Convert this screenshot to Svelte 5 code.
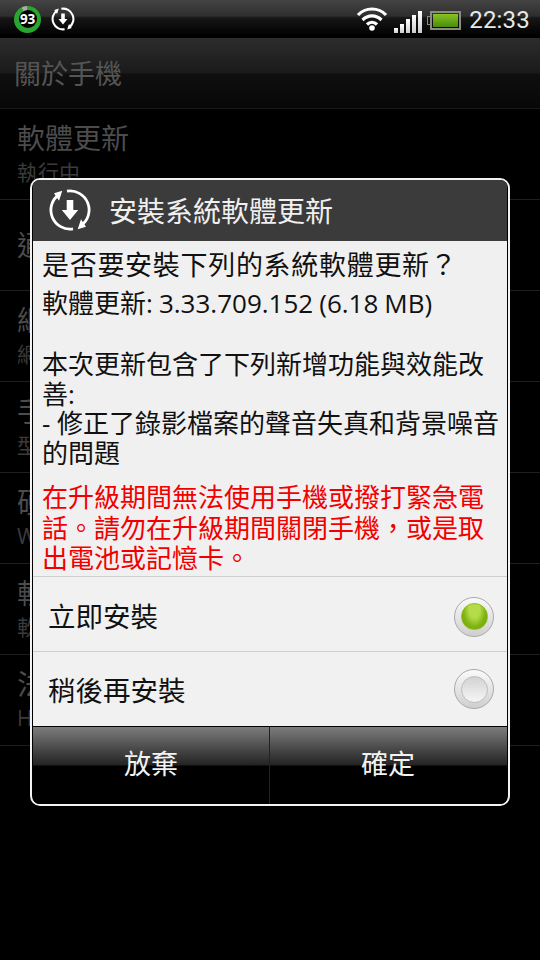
<script lang="ts">
  const rows = [
    { title: "軟體更新", sub: "執行中" },
    { title: "通知", sub: "" },
    { title: "網路", sub: "網路狀態" },
    { title: "手機身分", sub: "型號、電話號碼" },
    { title: "硬體資訊", sub: "Wi-Fi MAC" },
    { title: "軟體資訊", sub: "軟體版本" },
    { title: "法律資訊", sub: "HTC 法律資訊" },
  ];
  let choice = $state("now");
</script>

{#snippet updateIcon(size: number, stroke: number)}
  <svg viewBox="0 0 44 44" width={size} height={size} fill="none">
    <path d="M11 6.500A19 19 0 0 0 25 40.800" stroke="#fff" stroke-width={stroke} />
    <path d="M19 3.200A19 19 0 0 1 33 37.500" stroke="#fff" stroke-width={stroke} />
    <path d="M14.300 2.700L6 5.300l5 7.400zM29.700 41.300l8.300-2.600-5-7.400z" fill="#fff" />
    <path d="M18.700 12h6.600v10h4.900L22 32 13.800 22h4.900z" fill="#fff" />
  </svg>
{/snippet}

<div class="screen">
  <div class="status">
    <div class="status-left">
      <div class="battery-ring"><span>93</span></div>
      {@render updateIcon(24, 3.8)}
    </div>
    <div class="status-right">
      <svg class="wifi" viewBox="0 0 32 26" width="32" height="26" fill="none" stroke="#fff" stroke-width="3.200">
        <path d="M2 10C9.500 2 22.500 2 30 10" />
        <path d="M6.500 15C12 9.500 20 9.500 25.500 15" />
        <path d="M11 19.500C14 16.500 18 16.500 21 19.500" />
        <circle cx="16" cy="23" r="2.800" fill="#fff" stroke="none" />
      </svg>
      <div class="signal">
        <i style="height: 5px"></i>
        <i style="height: 9px"></i>
        <i style="height: 14px"></i>
        <i style="height: 18px"></i>
        <i style="height: 22px"></i>
      </div>
      <div class="battery"><div class="battery-fill"></div></div>
      <span class="clock">22:33</span>
    </div>
  </div>

  <div class="header">關於手機</div>

  <div class="list">
    {#each rows as row}
      <div class="row" class:single={!row.sub}>
        <div class="row-title">{row.title}</div>
        {#if row.sub}<div class="row-sub">{row.sub}</div>{/if}
      </div>
    {/each}
  </div>

  <div class="dialog">
    <div class="dialog-title">
      {@render updateIcon(44, 2.8)}
      <span>安裝系統軟體更新</span>
    </div>

    <div class="dialog-body">
      <div class="question">是否要安裝下列的系統軟體更新？</div>
      <div class="version">軟體更新: 3.33.709.152 (6.18 MB)</div>
      <div class="notes">本次更新包含了下列新增功能與效能改善:<br />- 修正了錄影檔案的聲音失真和背景噪音的問題</div>
      <div class="warning">在升級期間無法使用手機或撥打緊急電話。請勿在升級期間關閉手機，或是取出電池或記憶卡。</div>
    </div>

    <button class="option first" onclick={() => (choice = "now")}>
      <span>立即安裝</span>
      <span class="radio" class:on={choice === "now"}><i></i></span>
    </button>
    <button class="option" onclick={() => (choice = "later")}>
      <span>稍後再安裝</span>
      <span class="radio" class:on={choice === "later"}><i></i></span>
    </button>

    <div class="actions">
      <button class="action">放棄</button>
      <button class="action">確定</button>
    </div>
  </div>
</div>

<style>
  :global(body) {
    background: #000;
  }

  .screen {
    position: relative;
    width: 540px;
    height: 960px;
    overflow: hidden;
    background: #000;
    font-family: "Open Sans", "Noto Sans CJK TC", sans-serif;
  }

  .status {
    height: 38px;
    display: flex;
    justify-content: space-between;
    align-items: center;
    background: linear-gradient(#444 0, #2e2e2e 16px, #161616 18px, #000 36px);
  }

  .status-left {
    display: flex;
    align-items: center;
    gap: 10px;
    padding-left: 14px;
  }

  .battery-ring {
    width: 27px;
    height: 27px;
    border-radius: 50%;
    display: flex;
    align-items: center;
    justify-content: center;
    background: conic-gradient(#2aa531 0 93%, #aaa 93% 100%);
  }

  .battery-ring span {
    width: 18px;
    height: 18px;
    border-radius: 50%;
    background: #000;
    color: #fff;
    font-size: 13.500px;
    font-weight: 700;
    letter-spacing: -0.3px;
    line-height: 18px;
    text-align: center;
  }

  .status-right {
    display: flex;
    align-items: center;
    padding-right: 10px;
  }

  .wifi {
    margin: 0 6px 2px 0;
  }

  .signal {
    display: flex;
    align-items: flex-end;
    gap: 2px;
    height: 22px;
    margin: 6px 8px 0 0;
  }

  .signal i {
    width: 4px;
    background: linear-gradient(#fff, #ccc);
  }

  .battery {
    position: relative;
    width: 25px;
    height: 13px;
    padding: 1px;
    border: 2px solid #8b8b80;
    margin: 3px 8px 0 0;
  }

  .battery::before {
    content: "";
    position: absolute;
    left: -5px;
    top: 3px;
    width: 2px;
    height: 7px;
    border: 1px solid #8b8b80;
    border-right: 0;
  }

  .battery-fill {
    height: 100%;
    background: linear-gradient(#86c522, #4a8a0c);
  }

  .clock {
    color: #e8e8e8;
    font-family: "Roboto", sans-serif;
    font-size: 24px;
    letter-spacing: 0.2px;
    padding-top: 2px;
  }

  .header {
    height: 71px;
    box-sizing: border-box;
    padding: 17px 0 0 14px;
    color: #555;
    font-size: 27px;
    line-height: 38px;
    background: linear-gradient(#2d2d2d 0, #1a1a1a 35px, #0f0f0f 36px, #070707 71px);
    border-bottom: 1px solid #1a1a1a;
  }

  .list {
    display: flex;
    flex-direction: column;
  }

  .row {
    height: 91px;
    box-sizing: border-box;
    padding: 11px 0 0 17px;
    border-bottom: 1px solid #1f1f1f;
    color: #4c4c4c;
    overflow: hidden;
  }

  .row.single {
    display: flex;
    align-items: center;
    padding-top: 0;
  }

  .row-title {
    font-size: 28px;
    line-height: 36px;
  }

  .row-sub {
    color: #3b3b3b;
    font-size: 21px;
    line-height: 29px;
    margin-top: 2px;
  }

  .dialog {
    position: absolute;
    left: 30px;
    top: 178px;
    width: 480px;
    height: 628px;
    box-sizing: border-box;
    display: flex;
    flex-direction: column;
    border: 2px solid #f2f2f2;
    border-radius: 10px;
    padding: 0 1px;
    overflow: hidden;
    background: #000;
  }

  .dialog-title {
    height: 61px;
    flex: none;
    display: flex;
    align-items: center;
    gap: 17px;
    padding: 0 0 2px 15px;
    box-sizing: border-box;
    background: #3b3b3b;
    color: #f0f0f0;
    font-size: 28px;
  }

  .dialog-body {
    height: 335px;
    flex: none;
    box-sizing: border-box;
    padding: 6px 6px 0 9px;
    background: #f0f0f0;
    color: #111;
    font-size: 26px;
    line-height: 29.500px;
  }

  .question {
    font-size: 27px;
    line-height: 36px;
    letter-spacing: 0.7px;
  }

  .version {
    line-height: 40px;
    margin-bottom: 27px;
    word-spacing: -0.7px;
  }

  .notes {
    margin-bottom: 14px;
  }

  .warning {
    color: #f20000;
    line-height: 30.500px;
  }

  .option {
    height: 75px;
    flex: none;
    display: flex;
    justify-content: space-between;
    align-items: center;
    padding: 0 13px 0 15px;
    border: 0;
    border-top: 1px solid #cfcfcf;
    background: #f1f1f1;
    color: #111;
    font-family: inherit;
    font-size: 27.500px;
  }

  .option.first {
    padding-top: 1px;
  }

  .option.first .radio {
    margin-top: 4px;
  }

  .radio {
    width: 40px;
    height: 40px;
    box-sizing: border-box;
    display: flex;
    align-items: center;
    justify-content: center;
    border: 1px solid #aaa;
    border-radius: 50%;
    background: linear-gradient(#fafafa, #cfcfcf);
  }

  .radio i {
    width: 27px;
    height: 27px;
    box-sizing: border-box;
    border: 1px solid #bdbdbd;
    border-radius: 50%;
    background: linear-gradient(#d2d2d2, #f6f6f6);
  }

  .radio.on i {
    border-color: #8fb81e;
    background: radial-gradient(ellipse at 50% 22%, #b4dc4a 0 30%, #7fb414 62%, #6d9e0a);
  }

  .actions {
    flex: 1;
    display: grid;
    grid-template-columns: 236px 1fr;
    border-top: 1px solid #000;
  }

  .action {
    border: 0;
    background: linear-gradient(#7c7c7c 0, #232323 38px, #000 39px);
    color: #f2f2f2;
    font-family: inherit;
    font-size: 27px;
    padding: 0 0 6px;
  }

  .action + .action {
    border-left: 1px solid #222;
    padding-right: 1px;
  }
</style>
